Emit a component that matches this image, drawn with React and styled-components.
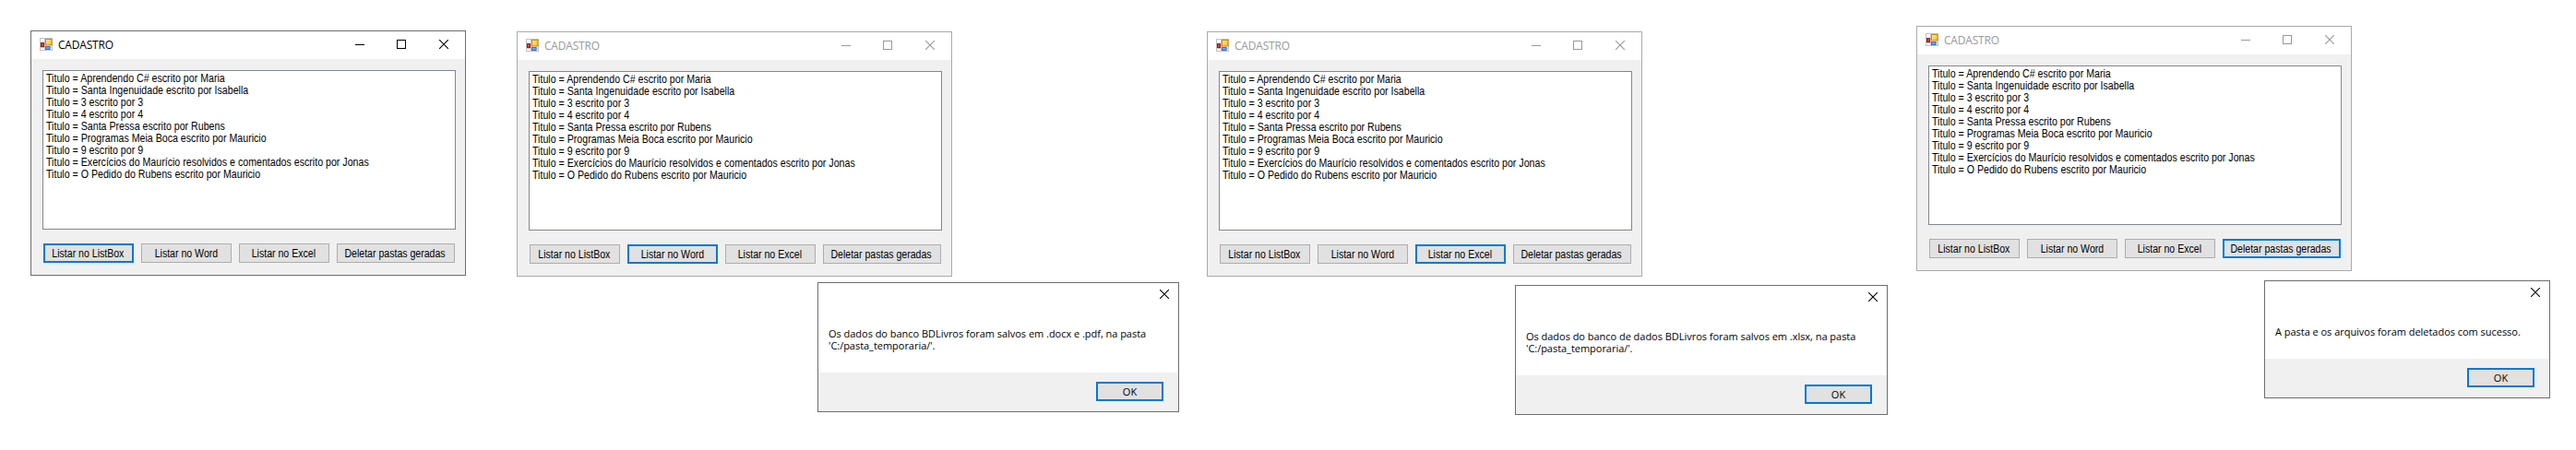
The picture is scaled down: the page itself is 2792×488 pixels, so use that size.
import React from 'react';
import styled, { createGlobalStyle } from 'styled-components';

const GlobalStyle = createGlobalStyle`
  * { box-sizing: border-box; }
  body { margin: 0; background: #fff; }
`;

const Desktop = styled.main`
  position: relative;
  width: 2792px;
  height: 488px;
  overflow: hidden;
  background: #fff;
  color: #000;
`;

const Frame = styled.section`
  position: absolute;
  left: ${(p) => p.$x}px;
  top: ${(p) => p.$y}px;
  display: flex;
  flex-direction: column;
  border: 1px solid ${(p) => (p.$active ? '#6d6d6e' : '#aaaaaa')};
`;

const FormFrame = styled(Frame)`
  width: 472px;
  height: 266px;
  background: #f0f0f0;
`;

const TitleBar = styled.header`
  display: flex;
  align-items: flex-start;
  height: 30px;
  padding-left: 9px;
  background: #fff;
  color: ${(p) => (p.$active ? '#000' : '#999')};
`;

const AppIcon = styled.svg`
  display: block;
  flex: none;
  width: 14px;
  height: 14px;
  margin-top: 7px;
`;

const Title = styled.h1`
  flex: 1;
  margin: 6px 0 0 6px;
  font: 400 12px/17px 'Open Sans', sans-serif;
  letter-spacing: -0.2px;
`;

const Caption = styled.span`
  display: flex;
  justify-content: center;
  width: ${(p) => p.$width}px;
  padding-top: 9px;
`;

const Glyph = styled.svg`
  display: block;
  width: 10px;
  height: 10px;
  fill: none;
  stroke: currentColor;
  stroke-width: 1;
`;

const FormBody = styled.div`
  display: flex;
  flex-direction: column;
  gap: 15px;
  padding: 12px 10px 13px 12px;
`;

const ListBox = styled.ul`
  height: 173px;
  margin: 0;
  padding: 2px 0 0 3.4px;
  border: 1px solid #828790;
  background: #fff;
  list-style: none;
`;

const ListRow = styled.li`
  width: max-content;
  font: 12px/13px 'Liberation Sans', Arial, sans-serif;
  white-space: nowrap;
  transform: scaleX(0.886);
  transform-origin: left;
`;

const ButtonRow = styled.div`
  display: flex;
  gap: 8px;
  padding-left: 1px;
`;

const Button = styled.button`
  display: flex;
  justify-content: center;
  width: ${(p) => p.$width}px;
  height: 21px;
  margin: 0;
  padding: 1px 0 0;
  border: 0;
  background: #e1e1e1;
  box-shadow: inset 0 0 0 ${(p) => (p.$focused ? '2px #0078d7' : '1px #adadad')};
  color: #000;
  font: 11px/20px 'Open Sans', sans-serif;
`;

const FormButton = styled(Button)`
  padding-right: 1px;
  font: 12px/20px 'Liberation Sans', Arial, sans-serif;
`;

const Label = styled.span`
  flex: none;
  white-space: nowrap;
  transform: scaleX(0.88);
`;

const DialogFrame = styled(Frame)`
  width: ${(p) => p.$width}px;
  background: #fff;
`;

const DialogTop = styled.header`
  display: flex;
  justify-content: flex-end;
  height: 48px;
  padding: 7px 10px 0 0;
`;

const Message = styled.p`
  margin: 0;
  padding: 0 0 23px 11px;
  font: 11px/13px 'Open Sans', sans-serif;
  letter-spacing: -0.03px;
  white-space: pre;
`;

const DialogFooter = styled.footer`
  display: flex;
  justify-content: flex-end;
  height: 42px;
  padding: 10px 16px 0 0;
  background: #f0f0f0;
`;

const ROWS = [
  'Titulo = Aprendendo C# escrito por Maria',
  'Titulo = Santa Ingenuidade escrito por Isabella',
  'Titulo = 3 escrito por 3',
  'Titulo = 4 escrito por 4',
  'Titulo = Santa Pressa escrito por Rubens',
  'Titulo = Programas Meia Boca escrito por Mauricio',
  'Titulo = 9 escrito por 9',
  'Titulo = Exercícios do Maurício resolvidos e comentados escrito por Jonas',
  'Titulo = O Pedido do Rubens escrito por Mauricio',
];

const ACTIONS = [
  { label: 'Listar no ListBox', width: 98 },
  { label: 'Listar no Word', width: 98 },
  { label: 'Listar no Excel', width: 98 },
  { label: 'Deletar pastas geradas', width: 128 },
];

const FORMS = [
  { x: 33, y: 33, active: true, focused: 0 },
  { x: 560, y: 34, active: false, focused: 1 },
  { x: 1308, y: 34, active: false, focused: 2 },
  { x: 2077, y: 28, active: false, focused: 3 },
];

const DIALOGS = [
  {
    x: 886, y: 306, width: 392,
    text: "Os dados do banco BDLivros foram salvos em .docx e .pdf, na pasta\n'C:/pasta_temporaria/'.",
  },
  {
    x: 1642, y: 309, width: 404,
    text: "Os dados do banco de dados BDLivros foram salvos em .xlsx, na pasta\n'C:/pasta_temporaria/'.",
  },
  { x: 2454, y: 304, width: 310, text: 'A pasta e os arquivos foram deletados com sucesso.' },
];

function FormIcon() {
  return (
    <AppIcon viewBox="0 0 14 14">
      <defs>
        <linearGradient id="gold" x1="0" y1="0" x2="1" y2="1">
          <stop offset="0" stopColor="#fff0a0" />
          <stop offset="1" stopColor="#f5b51c" />
        </linearGradient>
      </defs>
      <rect x="0.5" y="0.5" width="13" height="13" fill="#fff" stroke="#bfbfc2" />
      <path d="M5.5 0V14M0 10.5H14M11.5 9V14" stroke="#c6c6ca" fill="none" />
      <rect x="6.5" y="1.5" width="6.5" height="6.5" fill="url(#gold)" stroke="#c48a14" />
      <rect x="1.5" y="5.5" width="3" height="4" fill="#d9412f" stroke="#a3170f" />
      <rect x="6.5" y="9.5" width="4.5" height="3" fill="#6ea4f2" stroke="#3a6fd0" />
    </AppIcon>
  );
}

function CloseGlyph() {
  return (
    <Glyph viewBox="0 0 10 10">
      <path d="M0 0L10 10M10 0L0 10" strokeWidth="1.1" />
    </Glyph>
  );
}

function Form({ x, y, active, focused }) {
  return (
    <FormFrame $x={x} $y={y} $active={active}>
      <TitleBar $active={active}>
        <FormIcon />
        <Title>CADASTRO</Title>
        <Caption $width={44}>
          <Glyph viewBox="0 0 10 10"><path d="M0 5.5H10" /></Glyph>
        </Caption>
        <Caption $width={46}>
          <Glyph viewBox="0 0 10 10"><rect x="0.5" y="0.5" width="9" height="9" /></Glyph>
        </Caption>
        <Caption $width={46}><CloseGlyph /></Caption>
      </TitleBar>
      <FormBody>
        <ListBox>
          {ROWS.map((row) => <ListRow key={row}>{row}</ListRow>)}
        </ListBox>
        <ButtonRow>
          {ACTIONS.map((action, i) => (
            <FormButton key={action.label} $width={action.width} $focused={i === focused}>
              <Label>{action.label}</Label>
            </FormButton>
          ))}
        </ButtonRow>
      </FormBody>
    </FormFrame>
  );
}

function Dialog({ x, y, width, text }) {
  return (
    <DialogFrame $x={x} $y={y} $width={width} $active>
      <DialogTop><CloseGlyph /></DialogTop>
      <Message>{text}</Message>
      <DialogFooter>
        <Button $width={73} $focused>OK</Button>
      </DialogFooter>
    </DialogFrame>
  );
}

export default function App() {
  return (
    <Desktop>
      <GlobalStyle />
      {FORMS.map((form) => <Form key={form.x} {...form} />)}
      {DIALOGS.map((dialog) => <Dialog key={dialog.x} {...dialog} />)}
    </Desktop>
  );
}
